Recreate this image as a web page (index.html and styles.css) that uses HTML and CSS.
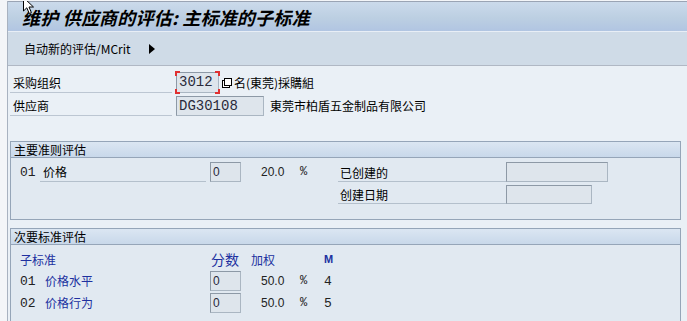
FILE: index.html
```html
<!DOCTYPE html>
<html>
<head>
	<title>维护 供应商的评估</title>
	<meta charset="utf-8" />
	<link rel="stylesheet" href="styles.css">
</head>
<body>
	<div class="screen">
		<div class="titlebar">
			<h1>维护 供应商的评估: 主标准的子标准</h1>
		</div>
		<div class="toolbar">
			<span class="tool">自动新的评估/MCrit</span>
			<span class="more"></span>
		</div>
		<div class="content">
			<div class="head-fields">
				<div class="hrow">
					<span class="hlabel">采购组织</span>
					<span class="focus"><span class="field code">3012</span></span>
					<span class="help">
						<svg width="10" height="10" viewBox="0 0 10 10"><rect x="0.5" y="2.5" width="7" height="7" fill="#fff" stroke="#000"/><rect x="2.5" y="0.5" width="7" height="7" fill="#fff" stroke="#000"/></svg>
					</span>
					<span class="htext">名(東莞)採購組</span>
				</div>
				<div class="hrow">
					<span class="hlabel">供应商</span>
					<span class="field code wide">DG30108</span>
					<span class="htext spaced">東莞市柏盾五金制品有限公司</span>
				</div>
			</div>

			<div class="group">
				<div class="group-title">主要准则评估</div>
				<div class="group-body main-grid">
					<span class="num">01</span>
					<span class="lbl line">价格</span>
					<span class="cell"><span class="field score">0</span></span>
					<span class="val">20.0</span>
					<span class="pct">%</span>
					<span class="lbl2 line">已创建的</span>
					<span class="cell"><span class="field info"></span></span>

					<span class="lbl2 line col6">创建日期</span>
					<span class="cell"><span class="field info short"></span></span>
				</div>
			</div>

			<div class="group">
				<div class="group-title">次要标准评估</div>
				<div class="group-body sub-grid">
					<span class="blue head-sub">子标准</span>
					<span class="blue big">分数</span>
					<span class="blue">加权</span>
					<span></span>
					<span class="blue m">M</span>

					<span class="num">01</span>
					<span class="lbl blue">价格水平</span>
					<span class="cell"><span class="field score">0</span></span>
					<span class="val">50.0</span>
					<span class="pct">%</span>
					<span class="num">4</span>

					<span class="num">02</span>
					<span class="lbl blue">价格行为</span>
					<span class="cell"><span class="field score">0</span></span>
					<span class="val">50.0</span>
					<span class="pct">%</span>
					<span class="num">5</span>
				</div>
			</div>
		</div>
		<svg class="cursor" width="14" height="18" viewBox="0 0 14 18"><path d="M0.5 0.5 L0.5 14 L3.8 10.8 L6.3 16.5 L8.4 15.6 L6 10 L10.5 10 Z" fill="#fff" stroke="#000"/></svg>
	</div>
</body>
</html>
```
FILE: styles.css
```css
/* general */
* { box-sizing: border-box; }
body { margin: 0; background: #f3f5f8; font-family: "Liberation Sans", "Noto Sans CJK SC", sans-serif; font-size: 12px; color: #000; }
.screen { position: relative; margin: 1px 0 0 7px; height: 320px; overflow: hidden; border-left: 1px solid #a8b2c0; }

/* title + toolbar */
.titlebar { height: 31px; border-top: 1px solid #9aa4b4; border-bottom: 1px solid #e8eef6; background: linear-gradient(#cbdaeb, #bccfe2 55%, #b1c5e2); }
.titlebar h1 { margin: 0; padding-left: 14px; font-family: "Noto Sans CJK SC", sans-serif; font-size: 18px; font-weight: bold; font-style: italic; line-height: 30px; letter-spacing: 0.2px; color: #000; }
.toolbar { display: flex; align-items: center; height: 34px; padding-left: 16px; background: #cfdbe7; border-bottom: 1px solid #b0b8c4; box-shadow: 0 1px 0 #f4f7fa; }
.tool { font-family: "Noto Sans CJK SC", sans-serif; font-size: 12px; }
.more { margin-left: 18px; width: 0; height: 0; border-top: 5px solid transparent; border-bottom: 5px solid transparent; border-left: 6px solid #000; }

/* content */
.content { background: #eaf0f6; padding: 6px 6px 0 2px; height: 256px; }
.head-fields { display: flex; flex-direction: column; gap: 2px; }
.hrow { display: flex; align-items: center; height: 21px; }
.hlabel { width: 162px; height: 21px; padding: 3px 0 0 3px; border-bottom: 1px solid #bcc6d2; font-family: "Noto Sans CJK SC", sans-serif; line-height: 16px; margin-right: 4px; }
.htext { font-family: "Noto Sans CJK SC", sans-serif; }
.htext.spaced { margin-left: 6px; }
.field { display: inline-block; height: 20px; background: #dee5ec; border: 1px solid #aab6c2; border-top-color: #8d99a6; border-left-color: #8d99a6; color: #2a2a3a; line-height: 18px; padding-left: 2px; }
.code { font-family: "Liberation Mono", monospace; font-size: 14px; }
.focus { position: relative; display: inline-block; width: 43px; }
.focus .field { width: 43px; height: 21px; }
.focus::after { content: ""; position: absolute; left: -1px; top: -1px; right: -1px; bottom: -1px;
	background:
		linear-gradient(#e03030, #e03030) left top / 5px 2px no-repeat,
		linear-gradient(#e03030, #e03030) left top / 2px 5px no-repeat,
		linear-gradient(#e03030, #e03030) right top / 5px 2px no-repeat,
		linear-gradient(#e03030, #e03030) right top / 2px 5px no-repeat,
		linear-gradient(#e03030, #e03030) left bottom / 5px 2px no-repeat,
		linear-gradient(#e03030, #e03030) left bottom / 2px 5px no-repeat,
		linear-gradient(#e03030, #e03030) right bottom / 5px 2px no-repeat,
		linear-gradient(#e03030, #e03030) right bottom / 2px 5px no-repeat; }
.help { display: inline-flex; margin: 0 2px 0 3px; }
.wide { width: 88px; }

/* groups */
.group { margin: 25px 0 0 0; width: 671px; background: #e1e9f1; border: 1px solid #95a5b8; }
.group + .group { margin-top: 8px; }
.group-title { height: 16px; padding-left: 3px; border-bottom: 1px solid #95a5b8; background: linear-gradient(#dbe6f2, #c8d8ea); font-family: "Noto Sans CJK SC", sans-serif; line-height: 15px; }
.group-body { display: grid; grid-auto-rows: 20px; row-gap: 2px; align-items: center; padding: 4px 0 15px 9px; }
.main-grid { grid-template-columns: 20px 170px 41px 49px 38px 168px auto; }
.sub-grid { grid-template-columns: 20px 170px 41px 49px 24px auto; padding-bottom: 30px; }
.num { font-family: "Liberation Mono", monospace; font-size: 13px; color: #222; }
.lbl { align-self: stretch; margin-right: 4px; padding: 2px 0 0 3px; font-family: "Noto Sans CJK SC", sans-serif; line-height: 16px; }
.sub-grid .lbl { padding-left: 5px; }
.lbl2 { align-self: stretch; padding: 3px 0 0 2px; font-family: "Noto Sans CJK SC", sans-serif; line-height: 16px; }
.line { border-bottom: 1px solid #b4c0cc; }
.col6 { grid-column: 6; }
.cell { display: flex; }
.score { width: 31px; font-size: 12px; }
.info { width: 102px; height: 20px; }
.info.short { width: 86px; height: 19px; }
.val { padding-left: 10px; color: #222; }
.pct { font-family: "Liberation Mono", monospace; font-size: 12px; color: #222; }
.blue { color: #2030a0; font-family: "Noto Sans CJK SC", sans-serif; }
.head-sub { grid-column: 1 / 3; }
.big { font-size: 14px; padding-left: 1px; }
.m { font-family: "Liberation Sans Narrow", "Liberation Sans", sans-serif; font-weight: bold; font-size: 11px; }

.cursor { position: absolute; left: 15px; top: -4px; }
```
